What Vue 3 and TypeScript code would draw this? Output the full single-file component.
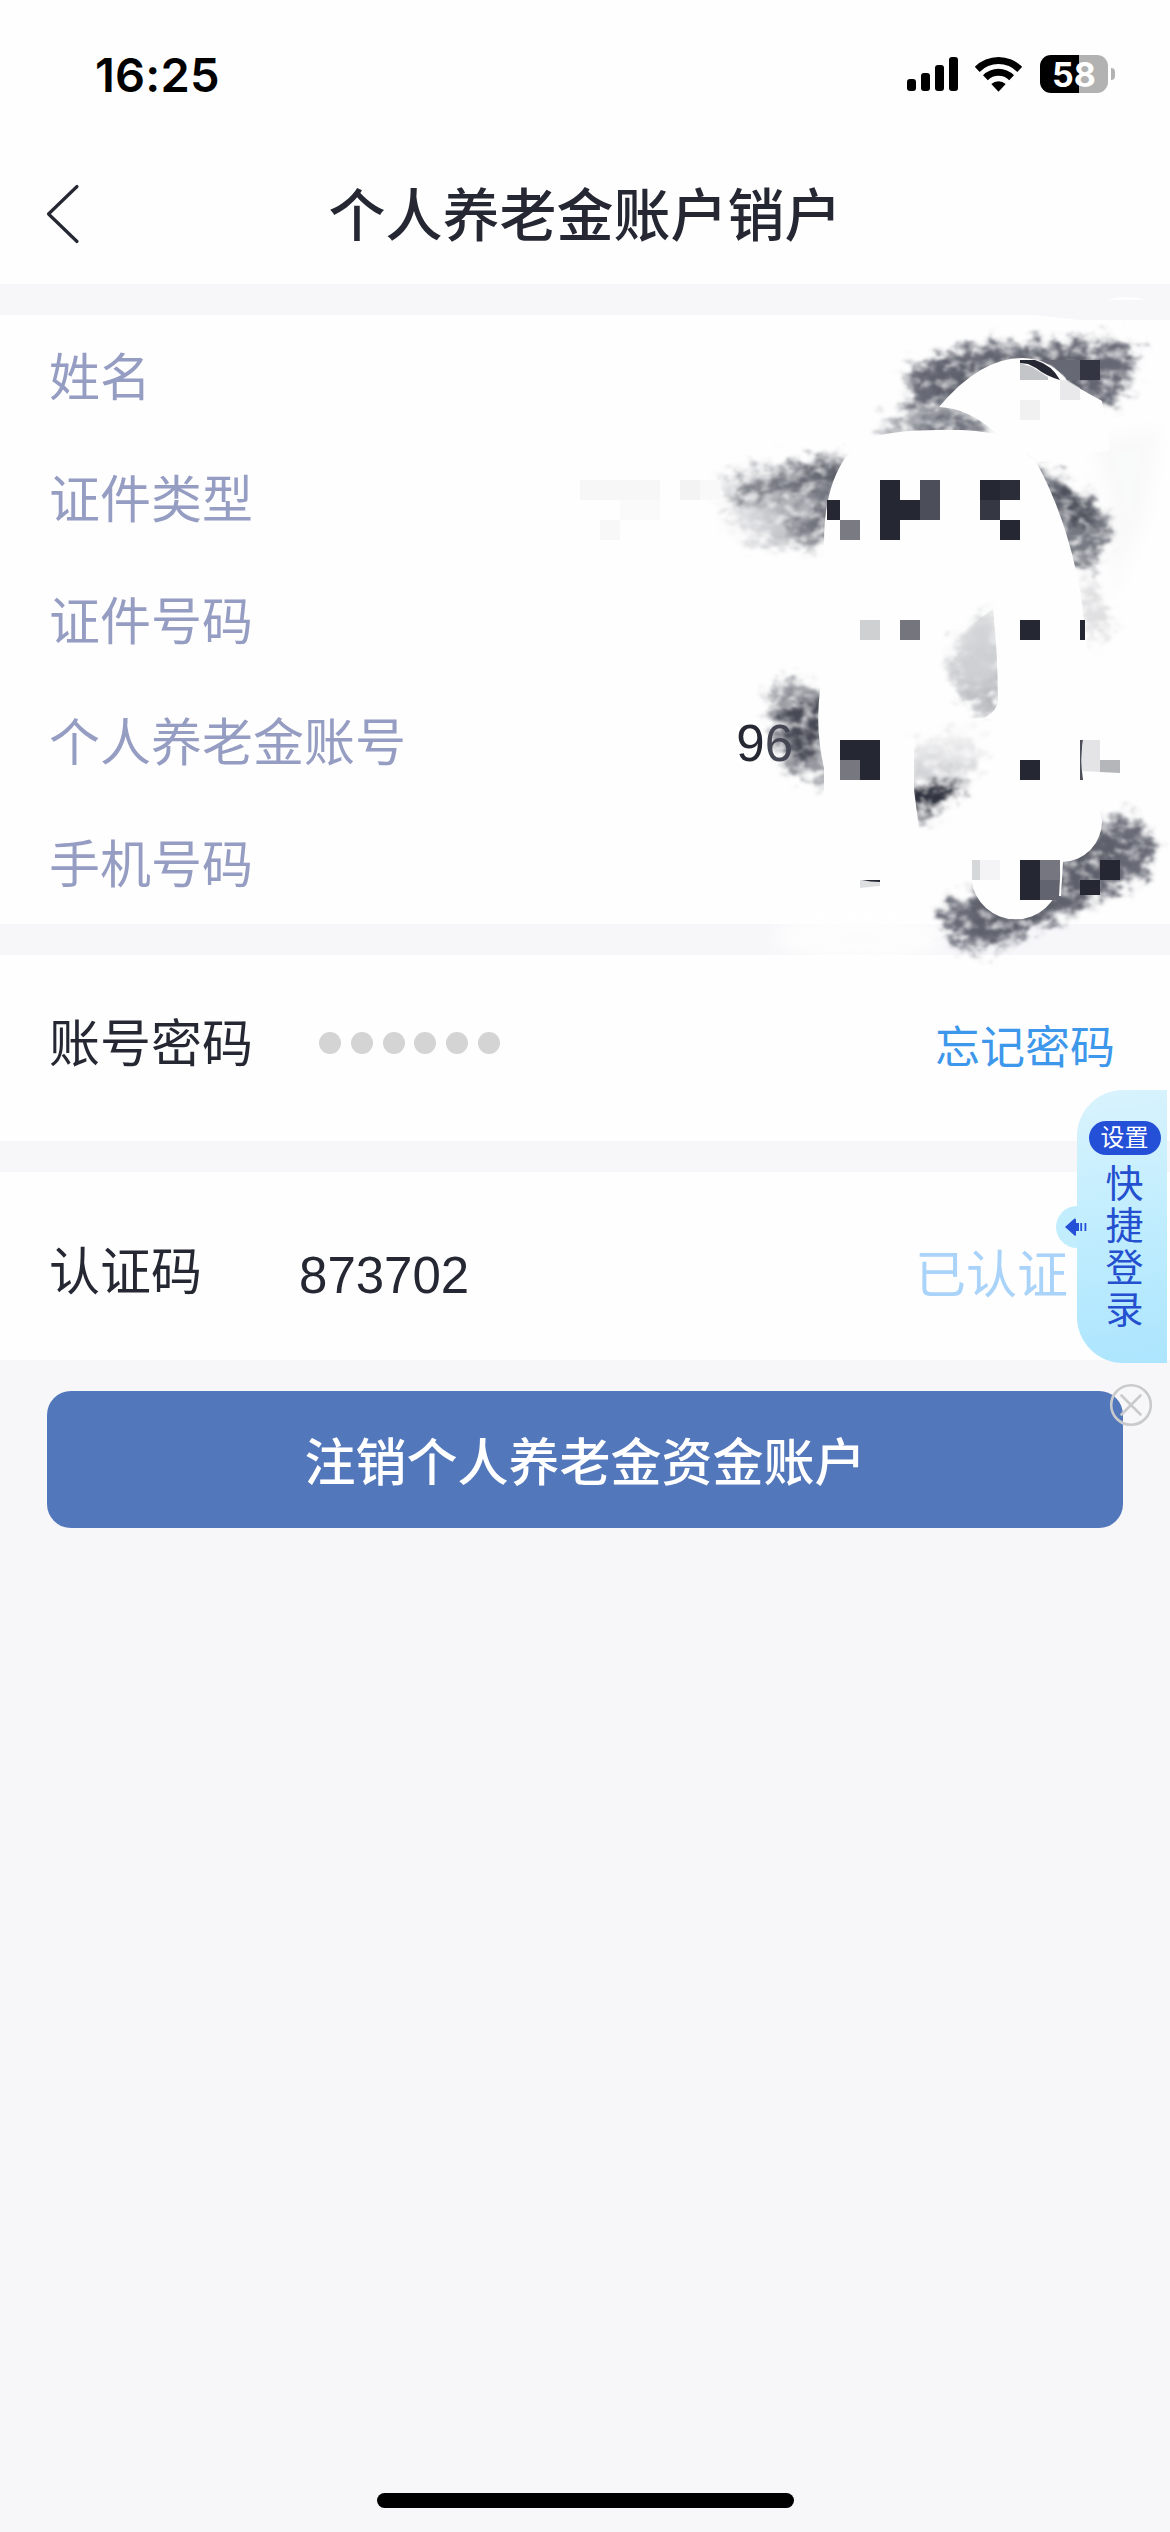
<script setup lang="ts">
interface Block {
  x: number
  y: number
  w: number
  h: number
  c: string
}

const labels: string[] = ['姓名', '证件类型', '证件号码', '个人养老金账号', '手机号码']
const quickLogin: string[] = ['快', '捷', '登', '录']
const dark = '#252833'

const b = (x: number, y: number, w: number, h: number, c: string): Block => ({ x, y, w, h, c })

const blocks: Block[] = [
  b(580, 480, 80, 20, '#f7f7f8'),
  b(620, 500, 40, 20, '#fafafa'),
  b(600, 520, 20, 20, '#f8f8f8'),
  b(680, 480, 20, 20, '#f3f3f4'),
  b(700, 480, 20, 20, '#f9f9fa'),
  b(1080, 360, 20, 20, '#333642'),
  b(1020, 400, 20, 20, '#f1f1f2'),
  b(827, 500, 13, 20, dark),
  b(840, 520, 20, 20, '#7a7b82'),
  b(880, 480, 20, 60, dark),
  b(900, 500, 20, 20, dark),
  b(920, 480, 20, 40, '#4c4f5a'),
  b(980, 480, 20, 20, dark),
  b(1000, 480, 20, 20, '#2b2e39'),
  b(980, 500, 20, 20, '#353843'),
  b(1000, 520, 20, 20, dark),
  b(860, 620, 20, 20, '#cfd0d2'),
  b(900, 620, 20, 20, '#75767d'),
  b(1020, 620, 20, 20, dark),
  b(1080, 620, 5, 20, dark),
  b(840, 740, 40, 40, dark),
  b(840, 760, 20, 20, '#77787f'),
  b(1020, 760, 20, 20, dark),
  b(972, 860, 8, 20, '#d6d7d9'),
  b(980, 860, 20, 20, '#f4f4f7'),
  b(1020, 860, 20, 40, dark),
  b(1040, 860, 20, 20, '#757680'),
  b(1040, 880, 20, 20, '#62656f'),
  b(1100, 860, 20, 20, dark),
  b(1080, 880, 20, 15, dark),
]
</script>

<template>
  <main class="screen">
    <header class="top">
      <div class="status">
        <span class="time">16:25</span>
        <div class="indicators">
          <svg class="signal" width="51" height="34" viewBox="0 0 51 34">
            <rect x="0" y="22" width="9" height="12" rx="3" />
            <rect x="14" y="16" width="9" height="18" rx="3" />
            <rect x="28" y="8" width="9" height="26" rx="3" />
            <rect x="42" y="0" width="9" height="34" rx="3" />
          </svg>
          <svg class="wifi" width="49" height="36" viewBox="0 0 49 36">
            <path d="M0.8 10.8A33.5 33.5 0 0 1 48.2 10.8L43.4 15.9A26.5 26.5 0 0 0 5.6 15.9Z" />
            <path d="M9 19.2A22 22 0 0 1 40 19.2L35.2 24.2A15 15 0 0 0 13.8 24.2Z" />
            <path d="M17.3 28A10.5 10.5 0 0 1 31.7 28L24.5 35.7Z" />
          </svg>
          <div class="battery"><span>58</span></div>
          <i class="nub"></i>
        </div>
      </div>
      <div class="nav">
        <svg class="back" width="36" height="62" viewBox="0 0 36 62">
          <path d="M32 3.5L3.5 31L32 58.5" fill="none" stroke="#252833" stroke-width="3.2" stroke-linecap="round" stroke-linejoin="round" />
        </svg>
        <h1>个人养老金账户销户</h1>
      </div>
    </header>

    <section class="info">
      <div v-for="(label, i) in labels" :key="label" class="row">
        <span>{{ label }}</span>
        <span v-if="i === 3" class="value">9<em>6</em></span>
      </div>
      <svg class="mask" width="610" height="690" viewBox="560 285 610 690">
        <defs>
          <filter id="chalk" x="-20%" y="-20%" width="140%" height="140%">
            <feGaussianBlur in="SourceGraphic" stdDeviation="5" result="soft" />
            <feTurbulence type="fractalNoise" baseFrequency="0.07 0.1" numOctaves="3" seed="7" result="noise" />
            <feDisplacementMap in="soft" in2="noise" scale="34" xChannelSelector="R" yChannelSelector="G" result="rough" />
            <feColorMatrix in="noise" type="matrix" values="0 0 0 0 0  0 0 0 0 0  0 0 0 0 0  0 0 2 0 -0.08" result="grain" />
            <feComposite in="rough" in2="grain" operator="in" result="textured" />
            <feGaussianBlur in="textured" stdDeviation="0.9" />
          </filter>
          <filter id="haze" x="-30%" y="-30%" width="160%" height="160%">
            <feGaussianBlur stdDeviation="8" />
          </filter>
          <linearGradient id="fadeLeft" x1="0" y1="0.7" x2="1" y2="0.3">
            <stop offset="0" stop-color="#8b8d96" stop-opacity=".1" />
            <stop offset=".5" stop-color="#6d707b" stop-opacity=".5" />
            <stop offset="1" stop-color="#555863" />
          </linearGradient>
          <linearGradient id="fadeDown" x1="0" y1="0" x2="0" y2="1">
            <stop offset="0" stop-color="#b9babf" stop-opacity=".2" />
            <stop offset="1" stop-color="#85878f" stop-opacity=".75" />
          </linearGradient>
        </defs>

        <path d="M1107 300Q1126 294 1146 300Z" fill="#fefefe" />
        <path d="M1035 315L1170 315V320H1080Z" fill="#f7f7fa" />
        <ellipse cx="860" cy="937" rx="85" ry="24" fill="#fefefe" opacity=".8" filter="url(#haze)" />

        <g filter="url(#chalk)">
          <path d="M908 370L953 352L987 345L1083 343L1120 342L1136 354L1130 380L1114 405L1098 405L1060 384L1020 360L945 408L914 408Z" fill="#666974" />
          <path d="M925 372L1010 355L1090 352L1090 390L1066 385L1020 360L945 402Z" fill="#5d606b" />
          <path d="M877 430L897 410L930 405L965 410L1000 434L935 440Z" fill="#8b8d96" opacity=".8" />
          <path d="M915 425L960 412L985 434H915Z" fill="#666974" />
          <path d="M719 479L761 467L850 459V545L796 548L765 545L731 527Z" fill="url(#fadeLeft)" />
          <path d="M730 487L845 466L840 482L740 500Z" fill="#555863" opacity=".7" />
          <path d="M790 520L845 500V540L796 538Z" fill="#555863" opacity=".6" />
          <path d="M1030 458L1071 488L1104 510L1110 530L1100 555L1086 568L1060 560Z" fill="#777a83" />
          <path d="M1045 480L1094 512L1092 530L1060 520Z" fill="#4a4d59" />
          <path d="M1080 570L1100 595L1113 625L1088 645Z" fill="#c4c5c9" opacity=".55" />
          <path d="M993 640L1000 708L983 714L960 690L950 663Z" fill="#c0c1c5" />
          <path d="M968 685L1000 672V708L983 714Z" fill="#777a83" opacity=".7" />
          <path d="M770 690L784 679L830 692V786L800 773L780 760L772 725Z" fill="#777a83" opacity=".75" />
          <path d="M782 704L830 700V732L812 748L812 768L788 755Z" fill="#464955" />
          <path d="M972 893L942 908L945 930L958 944L973 950L1003 943L1067 914L1143 877L1154 850L1138 818L1100 823L1060 860Z" fill="#666974" />
          <path d="M975 905L968 930L1005 934L1065 903L1112 873L1122 840L1100 830L1062 855Z" fill="#5d606b" />
        </g>

        <g fill="#8b8d96" filter="url(#haze)" opacity=".04">
          <path d="M1090 440L1160 430L1145 520L1110 600L1110 500Z" />
          <path d="M720 490L800 500V545L740 540Z" />
        </g>
        <path d="M975 617L996 608L997 690L960 672Z" fill="#cfd0d3" opacity=".85" filter="url(#haze)" />

        <g fill="#fefefe">
          <path d="M939 407Q980 358 1022 358Q1052 359 1068 382L1102 401L1110 450L1040 462L996 433Q968 408 939 407Z" />
          <path d="M876 436Q900 430 936 430Q975 429 1000 435L1035 460Q1066 515 1080 590Q1087 640 1087 660L1083 740L1102 820A40 41 0 0 1 1062 862L1060 880A44.5 44 0 0 1 971.500 880L920 834L914 785V757L936 722L983 718Q997 711 998 705Q998 650 993 609L938 650L914 757V834L824 800V768Q815 730 820 690L824 543Q824 487 846 457Z" />
        </g>

        <!-- smudge remnants lying between the two erased strokes -->
        <path d="M993 611V640L998 705L983 717L958 690L950 655L965 628Z" fill="#cfd0d3" opacity=".75" filter="url(#chalk)" />
        <g filter="url(#chalk)">
          <path d="M908 750L936 735L978 733L980 760L967 782L945 805L920 826L908 790Z" fill="url(#fadeDown)" />
          <path d="M906 792L963 778L946 803L912 816Z" fill="#2c2f3b" />
          <path d="M915 793L958 783L940 802L915 808Z" fill="#2c2f3b" />
        </g>
        <path d="M890 740H914V790L920 836H890Z" fill="#fefefe" />
        <path d="M993 605H1015V720L984 719Q998 710 998 700Q998 650 993 609Z" fill="#fefefe" />

        <path d="M1020 360H1035Q1052 365 1060 380Q1046 376 1036 368L1028 364L1020 363Z" fill="#252833" />
        <path d="M1020 363L1032 367L1048 377V380H1020Z" fill="#a5a6ac" opacity=".65" />
        <path d="M1040 360H1080V380H1067Q1060 366 1040 360Z" fill="#666974" />
        <path d="M1060 380H1067L1080 388V400H1060Z" fill="#e4e4e7" opacity=".8" />
        <rect v-for="(k, i) in blocks" :key="i" :x="k.x" :y="k.y" :width="k.w" :height="k.h" :fill="k.c" />
        <path d="M1080 740H1083Q1080 760 1083 780H1080Z" fill="#4c4f5a" />
        <path d="M1083 740H1100V772L1082 771Q1081 755 1083 740Z" fill="#e4e4e6" />
        <path d="M1100 760H1120V773L1100 772Z" fill="#b5b6ba" />
        <path d="M860 880H880V886L860 888Z" fill="#dedfe0" />
        <path d="M862 880H880V882Q870 882 862 880Z" fill="#252833" />
        <path d="M1062 862L1060 896" stroke="#fefefe" stroke-width="2" />
      </svg>
    </section>

    <section class="field">
      <span class="name">账号密码</span>
      <div class="dots"><i v-for="n in 6" :key="n"></i></div>
      <a class="forgot">忘记密码</a>
    </section>

    <section class="field code">
      <span class="name">认证码</span>
      <span class="digits">873702</span>
      <span class="verified">已认证</span>
    </section>

    <button class="submit">注销个人养老金资金账户</button>

    <aside class="quick">
      <svg class="handle" width="36" height="42" viewBox="0 0 36 42">
        <path d="M21 0A21 21 0 0 0 21 42Z" fill="#c1edfd" />
        <path d="M9 21L18.500 12.500Q20 12 20 14V17H23V25H20V28.500Q20 30.500 18.500 29.500Z" fill="#2450d8" />
        <path d="M25.200 17V25M29.400 17V25" stroke="#2450d8" stroke-width="1.800" />
      </svg>
      <span class="pill">设置</span>
      <span v-for="ch in quickLogin" :key="ch" class="ch">{{ ch }}</span>
    </aside>
    <svg class="close" width="44" height="44" viewBox="0 0 44 44" fill="none" stroke="#c9cacc" stroke-width="2.600" stroke-linecap="round">
      <circle cx="22" cy="22" r="19.800" />
      <path d="M12.500 12.500L31.500 31.500M31.500 12.500L12.500 31.500" />
    </svg>

    <div class="home"></div>
  </main>
</template>

<style>
body {
  margin: 0;
  background: #f7f7fa;
}
</style>

<style scoped>
.screen {
  position: relative;
  box-sizing: border-box;
  width: 1170px;
  height: 2532px;
  overflow: hidden;
  display: flex;
  flex-direction: column;
  background: #f7f7fa;
  color: #252833;
  font-family: "Liberation Sans", "Noto Sans CJK SC", sans-serif;
  font-size: 51px;
}
.top {
  height: 284px;
  background: #fefefe;
}
.status {
  height: 148px;
  box-sizing: border-box;
  padding: 0 55px 0 95px;
  display: flex;
  align-items: center;
  justify-content: space-between;
  color: #000;
}
.time {
  font: 600 47px/1 Inter, sans-serif;
  letter-spacing: 0.2px;
}
.indicators {
  display: flex;
  align-items: center;
}
.wifi {
  margin: 0 17px 0 16px;
}
.battery {
  width: 68px;
  height: 38px;
  border-radius: 11px;
  background: linear-gradient(90deg, #000 39px, #b2b2b2 39px);
  color: #fff;
  font: 700 34px/39px Inter, sans-serif;
  text-align: center;
}
.nub {
  width: 4px;
  height: 12px;
  margin-left: 3px;
  border-radius: 0 5px 5px 0;
  background: #b2b2b2;
}
.nav {
  height: 126px;
  display: flex;
  align-items: center;
  padding: 0 45px;
}
.back {
  margin-top: 6px;
}
h1 {
  flex: 1;
  margin: 0 36px 0 0;
  font-size: 57px;
  font-weight: 500;
  line-height: 126px;
  text-align: center;
  font-family: "Noto Sans CJK SC", sans-serif;
}
.info {
  position: relative;
  box-sizing: border-box;
  height: 609px;
  margin-top: 31px;
  padding: 0 0 0 49px;
  background: #fefefe;
}
.row {
  display: flex;
  align-items: center;
  justify-content: space-between;
  height: 121.7px;
  color: #969dc2;
}
.row > span:first-child {
  margin-top: -3px;
}
.value {
  position: relative;
  z-index: 1;
  margin: 5px 377px 0 0;
  color: #252833;
}
.value em {
  font-style: normal;
  color: #454854;
}
.mask {
  position: absolute;
  left: 560px;
  top: -30px;
}
.field {
  display: flex;
  align-items: center;
  height: 186px;
  margin-top: 31px;
  padding: 0 55px 0 49px;
  background: #fefefe;
}
.name {
  margin-top: -16px;
}
.dots {
  display: flex;
  gap: 9.8px;
  margin: -10px 0 0 66px;
}
.dots i {
  width: 22px;
  height: 22px;
  border-radius: 50%;
  background: #d4d4d4;
}
.forgot {
  margin: -7px 0 0 auto;
  font-size: 45px;
  color: #3d97ea;
}
.field.code {
  height: 188px;
  padding-right: 102px;
}
.code .name {
  margin-top: 4px;
}
.digits {
  margin: 18px 0 0 97px;
}
.verified {
  margin: 9px 0 0 auto;
  color: #a9d3f8;
}
.submit {
  height: 137px;
  margin: 31px 47px 0;
  padding: 0;
  border: 0;
  border-radius: 24px;
  background: #5377bb;
  color: #fff;
  font: 500 51px/137px "Noto Sans CJK SC", sans-serif;
}
.quick {
  position: absolute;
  top: 1090px;
  right: 3px;
  width: 90px;
  height: 273px;
  box-sizing: border-box;
  padding-top: 31px;
  display: flex;
  flex-direction: column;
  align-items: center;
  border-radius: 46px 0 0 46px;
  background: linear-gradient(170deg, #d9f3fd, #c0edfe 50%, #ace5fe);
  color: #2450d0;
}
.handle {
  position: absolute;
  left: -21px;
  top: 116px;
}
.pill {
  width: 72px;
  height: 34px;
  margin: 0 -5px 8px 0;
  border-radius: 17px;
  background: #2450d8;
  color: #fff;
  font-size: 24px;
  line-height: 33px;
  text-align: center;
}
.ch {
  height: 42px;
  margin-right: -5px;
  font-size: 38px;
  line-height: 42px;
}
.close {
  position: absolute;
  left: 1109px;
  top: 1383px;
}
.home {
  width: 417px;
  height: 15px;
  margin: auto auto 24px;
  border-radius: 8px;
  background: #000;
}
</style>
